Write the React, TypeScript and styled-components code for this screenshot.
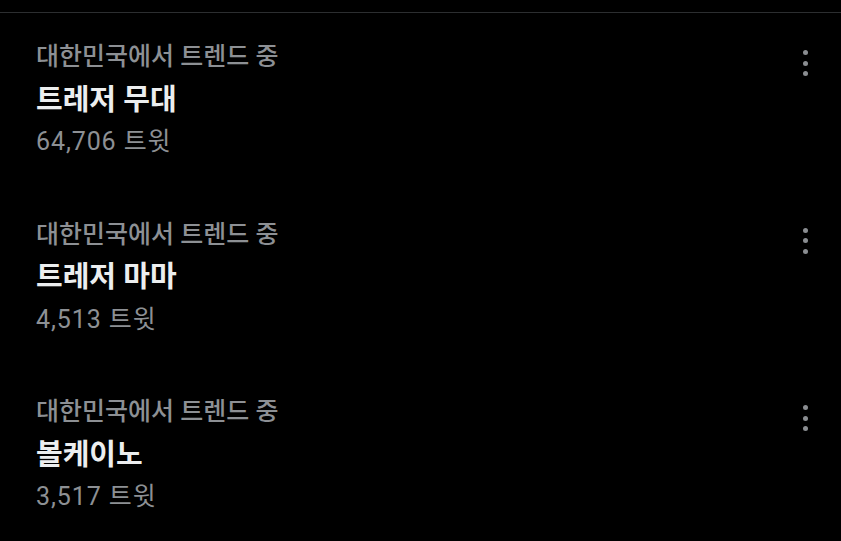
import styled, { createGlobalStyle } from "styled-components";

const GlobalStyle = createGlobalStyle`
  html, body {
    margin: 0;
    background: #000;
  }
  body {
    font-family: Roboto, "Noto Sans CJK KR", sans-serif;
  }
`;

const Page = styled.div`
  width: 841px;
  height: 541px;
  background: #000;
  padding-top: 12px;
  box-sizing: border-box;
  overflow: hidden;
`;

const List = styled.ul`
  list-style: none;
  margin: 0;
  padding: 0;
  border-top: 1px solid #2c2e30;
`;

const Item = styled.li`
  display: flex;
  align-items: flex-start;
  justify-content: space-between;
  padding: 23px 26px 27px 36px;
`;

const Info = styled.div`
  display: flex;
  flex-direction: column;
`;

const Context = styled.span`
  font-size: 25px;
  line-height: 42.5px;
  font-weight: 500;
  color: #8d9094;
`;

const Title = styled.span`
  font-size: 29px;
  line-height: 42.5px;
  font-weight: 700;
  color: #eceeef;
`;

const Count = styled.span`
  font-size: 25px;
  line-height: 42.5px;
  letter-spacing: 0.9px;
  color: #8d9094;
`;

const More = styled.button`
  display: flex;
  flex-direction: column;
  align-items: center;
  gap: 5.5px;
  width: 20px;
  margin-top: 14px;
  padding: 0;
  border: 0;
  background: none;
`;

const Dot = styled.span`
  width: 5px;
  height: 5px;
  border-radius: 50%;
  background: #8a8d91;
`;

const trends = [
  { title: "트레저 무대", count: "64,706" },
  { title: "트레저 마마", count: "4,513" },
  { title: "볼케이노", count: "3,517" },
];

export default function App() {
  return (
    <>
      <GlobalStyle />
      <Page>
        <List>
          {trends.map((t) => (
            <Item key={t.title}>
              <Info>
                <Context>대한민국에서 트렌드 중</Context>
                <Title>{t.title}</Title>
                <Count>{t.count} 트윗</Count>
              </Info>
              <More aria-label="더 보기">
                <Dot />
                <Dot />
                <Dot />
              </More>
            </Item>
          ))}
        </List>
      </Page>
    </>
  );
}
